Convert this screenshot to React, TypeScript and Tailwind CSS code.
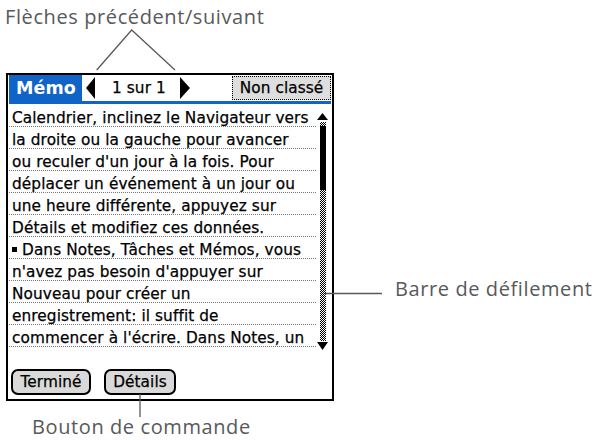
import React from "react";

const lines: React.ReactNode[] = [
  "Calendrier, inclinez le Navigateur vers",
  "la droite ou la gauche pour avancer",
  "ou reculer d'un jour à la fois. Pour",
  "déplacer un événement à un jour ou",
  "une heure différente, appuyez sur",
  "Détails et modifiez ces données.",
  <>
    <span className="inline-block w-[5px] h-[5px] bg-black align-[3px] mr-[5px]" />
    Dans Notes, Tâches et Mémos, vous
  </>,
  "n'avez pas besoin d'appuyer sur",
  "Nouveau pour créer un",
  "enregistrement: il suffit de",
  "commencer à l'écrire. Dans Notes, un",
];

function ScrollBar() {
  return (
    <div className="w-[11px] ml-[1px] h-[245px] flex flex-col items-center pt-[8px]">
      <svg width="11" height="7" viewBox="0 0 11 7" className="block shrink-0">
        <polygon points="5.5,0 11,7 0,7" fill="#000" />
      </svg>
      <div className="mt-[2px] w-[6px] flex-1 bg-[image:repeating-conic-gradient(#000_0_25%,#fff_0_50%)] bg-[length:2px_2px] flex flex-col">
        <div className="mt-[4px] h-[64px] bg-black" />
      </div>
      <svg width="11" height="8" viewBox="0 0 11 8" className="block shrink-0 mt-[1px]">
        <polygon points="0,0 11,0 5.5,8" fill="#000" />
      </svg>
    </div>
  );
}

function PalmButton({ label, width }: { label: string; width: string }) {
  return (
    <div
      className={`${width} h-[26px] rounded-[7px] border-2 border-black bg-[#d9d9d9] flex items-center justify-center leading-[20px]`}
    >
      {label}
    </div>
  );
}

function MemoScreen() {
  return (
    <div className="w-[328px] h-[328px] shrink-0 border-2 border-black bg-white flex flex-col font-['DejaVu_Sans',sans-serif] text-[15.3px] tracking-[0.1px] text-black [-webkit-text-stroke:0.25px_black]">
      {/* title bar */}
      <div className="h-[26px] flex items-center">
        <div className="ml-[1px] self-stretch w-[73px] bg-[#1064c8] text-white font-bold text-[17.5px] leading-[20px] pl-[7px] flex items-center [-webkit-text-stroke:0px]">
          Mémo
        </div>
        <svg width="9" height="22" viewBox="0 0 9 22" className="block ml-[4px]">
          <polygon points="9,0 9,22 0,11" fill="#000" />
        </svg>
        <span className="ml-[17px] leading-[20px]">1 sur 1</span>
        <svg width="10" height="22" viewBox="0 0 10 22" className="block ml-[14px]">
          <polygon points="0,0 0,22 10,11" fill="#000" />
        </svg>
        <div className="ml-auto mr-[1px] w-[99px] h-[24px] border border-dotted border-black bg-[#dedede] flex items-center justify-center leading-[20px]">
          Non classé
        </div>
      </div>
      <div className="mx-[1px] h-[3px] bg-[#1064c8]" />

      {/* memo body */}
      <div className="flex items-start mt-[1px] ml-[1px]">
        <div className="w-[307px]">
          {lines.map((l, i) => (
            <div
              key={i}
              className="h-[22px] pt-[2px] pl-[3px] leading-[22px] whitespace-nowrap border-b border-dotted border-[#777]"
            >
              {l}
            </div>
          ))}
        </div>
        <ScrollBar />
      </div>

      {/* command buttons */}
      <div className="flex gap-[13px] ml-[3px] mt-[19px]">
        <PalmButton label="Terminé" width="w-[80px]" />
        <PalmButton label="Détails" width="w-[72px]" />
      </div>
    </div>
  );
}

export default function App() {
  return (
    <div className="relative w-[603px] h-[440px] bg-white overflow-hidden flex flex-col font-['Open_Sans',sans-serif] text-[20px] tracking-[0.6px] text-[#58595b]">
      <div className="h-[73px] pl-[5px] pt-[4px] leading-[26px]">Flèches précédent/suivant</div>
      <div className="flex items-start">
        <div className="ml-[6px]">
          <MemoScreen />
        </div>
        <div className="ml-[61px] mt-[203px] leading-[26px] whitespace-nowrap">Barre de défilement</div>
      </div>
      <div className="ml-[32px] mt-[13px] leading-[26px]">Bouton de commande</div>

      {/* callout leaders */}
      <svg className="absolute inset-0 pointer-events-none" width="603" height="440" viewBox="0 0 603 440">
        <g stroke="#58595b" strokeWidth="1.3" fill="none">
          <polyline points="96.7,70 131.7,30 175,70" />
          <line x1="325" y1="293.5" x2="382" y2="293.5" />
          <line x1="140" y1="394" x2="140" y2="417" />
        </g>
      </svg>
    </div>
  );
}
